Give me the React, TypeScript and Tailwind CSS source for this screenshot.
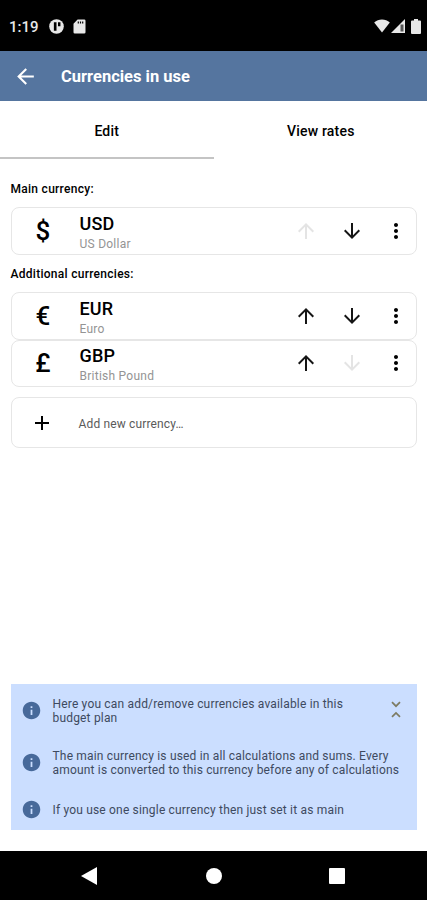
import { MdAdd, MdArrowBack, MdArrowDownward, MdArrowUpward, MdInfo, MdMoreVert } from "react-icons/md";

type Currency = {
  symbol: string;
  code: string;
  name: string;
  canMoveUp: boolean;
  canMoveDown: boolean;
};

const mainCurrency: Currency = { symbol: "$", code: "USD", name: "US Dollar", canMoveUp: false, canMoveDown: true };

const additionalCurrencies: Currency[] = [
  { symbol: "€", code: "EUR", name: "Euro", canMoveUp: true, canMoveDown: true },
  { symbol: "£", code: "GBP", name: "British Pound", canMoveUp: true, canMoveDown: false },
];

function StatusBar() {
  return (
    <div className="flex h-[51px] shrink-0 items-center bg-black pl-[9px] pr-[6px] pt-[2px] text-[#e8e8e8]">
      <span className="w-[40px] pt-[1px] text-[15px] font-medium">1:19</span>
      <svg className="-mt-[1px] h-[15px] w-[15px]" viewBox="0 0 16 16">
        <circle cx="8" cy="8" r="7.8" fill="currentColor" />
        <path d="M5.2 3.4h2.8v9H5.2zM9.6 3.4h2.6v4.4H9.6z" fill="#000" />
      </svg>
      <svg className="-mt-[1px] ml-[9px] h-[15px] w-[13px]" viewBox="0 0 13 15">
        <path d="M4.6 0.5h6.6A1.3 1.3 0 0 1 12.5 1.8v11.4a1.3 1.3 0 0 1-1.3 1.3H1.8A1.3 1.3 0 0 1 .5 13.2V4.8z" fill="currentColor" />
        <path d="M5.3 2.4v2M7.5 2.4v2M9.7 2.4v2" stroke="#000" strokeWidth="1.2" />
      </svg>
      <div className="-mt-[1px] ml-auto flex items-center">
        <svg className="h-[14px] w-4" viewBox="0 0 16 14">
          <path d="M8 13.6.2 3.6C4.4-.5 11.6-.5 15.8 3.6z" fill="currentColor" />
        </svg>
        <svg className="ml-[1px] h-[14px] w-[14px]" viewBox="0 0 14 14">
          <path d="M0 14 14 0v14z" fill="currentColor" />
          <path d="M9.5 5.5h3v7h-3z" fill="#555" />
        </svg>
        <svg className="ml-[6px] h-[15px] w-[10px]" viewBox="0 0 10 15">
          <path d="M3 0h4v1.6h2a1 1 0 0 1 1 1V14a1 1 0 0 1-1 1H1a1 1 0 0 1-1-1V2.6a1 1 0 0 1 1-1h2z" fill="currentColor" />
        </svg>
      </div>
    </div>
  );
}

function CurrencyCard({ currency }: { currency: Currency }) {
  return (
    <div className="flex h-[47.2px] items-center rounded-[8px] border-[1.5px] border-[#e6e6e6] bg-white">
      <span className="w-[63px] text-center text-[26px] font-medium leading-none">{currency.symbol}</span>
      <div className="ml-[5px] flex-1 pt-[4px]">
        <p className="text-[18px] font-medium leading-[22px] tracking-[0.2px]">{currency.code}</p>
        <p className="text-[12px] leading-[18px] tracking-[0.25px] text-[#949494]">{currency.name}</p>
      </div>
      <button className={currency.canMoveUp ? "text-[#151515]" : "text-[#e4e4e4]"}>
        <MdArrowUpward size={24} />
      </button>
      <button className={`ml-[22px] ${currency.canMoveDown ? "text-[#151515]" : "text-[#e4e4e4]"}`}>
        <MdArrowDownward size={24} />
      </button>
      <button className="ml-5 mr-[7.5px]">
        <MdMoreVert size={24} />
      </button>
    </div>
  );
}

export default function App() {
  return (
    <div className="flex h-[900px] w-[427px] flex-col overflow-hidden bg-white font-['Roboto',sans-serif] text-black">
      <StatusBar />

      {/* App bar */}
      <header className="flex h-[50px] shrink-0 items-center bg-[#55759f] pl-[13px] text-white">
        <MdArrowBack size={25} />
        <h1 className="ml-[23px] pt-[2px] text-[16.5px] font-bold">Currencies in use</h1>
      </header>

      {/* Tabs */}
      <nav className="grid h-[58px] shrink-0 grid-cols-2 text-[14px] font-medium tracking-[0.2px]">
        <button className="border-b-2 border-[#c4c4c4] pt-[5px]">Edit</button>
        <button className="border-b-2 border-transparent pl-[1px] pt-[5px]">View rates</button>
      </nav>

      <main className="flex flex-1 flex-col px-[10.5px]">
        <h2 className="mt-[22.4px] h-[26px] text-[12px] font-medium leading-[16px] tracking-[0.28px]">Main currency:</h2>
        <CurrencyCard currency={mainCurrency} />
        <h2 className="mt-[11.2px] h-[26.7px] text-[12px] font-medium leading-[16px] tracking-[0.28px]">Additional currencies:</h2>
        {additionalCurrencies.map((currency) => (
          <CurrencyCard key={currency.code} currency={currency} />
        ))}
        <button className="mt-[10.6px] flex h-[51px] items-center rounded-[8px] border-[1.5px] border-[#e6e6e6] text-left">
          <MdAdd size={24} className="ml-[18px]" />
          <span className="ml-[25px] pt-[2px] text-[12px] tracking-[0.15px] text-[#5a5a5a]">Add new currency…</span>
        </button>

        {/* Hints */}
        <section className="mb-[21px] mt-auto flex h-[146px] flex-col bg-[#cbdeff] pl-[10px] text-[12px] leading-[14.5px] tracking-[0.18px] text-[#3e4a60]">
          <div className="flex h-[52px] items-center">
            <MdInfo size={21} className="shrink-0 text-[#47699a]" />
            <p className="ml-[11px] w-[325px] pt-[2px]">
              Here you can add/remove currencies available in this
              <br />
              budget plan
            </p>
            <svg className="ml-[13px] h-[18px] w-[10px]" viewBox="0 0 10 18" fill="none" stroke="#7d7b62" strokeWidth="1.7">
              <path d="M1 1.2 5 5.2 9 1.2M1 15.9 5 11.9 9 15.9" />
            </svg>
          </div>
          <div className="flex h-[52px] items-center">
            <MdInfo size={21} className="shrink-0 text-[#47699a]" />
            <p className="ml-[11px] whitespace-nowrap pt-[2px]">
              The main currency is used in all calculations and sums. Every
              <br />
              amount is converted to this currency before any of calculations
            </p>
          </div>
          <div className="flex h-[42px] items-center">
            <MdInfo size={21} className="shrink-0 text-[#47699a]" />
            <p className="ml-[11px] pt-[2px]">If you use one single currency then just set it as main</p>
          </div>
        </section>
      </main>

      {/* System navigation */}
      <footer className="flex h-[49px] shrink-0 items-center bg-black">
        <svg className="ml-[81px] h-[18px] w-4" viewBox="0 0 16 18" fill="#fff">
          <path d="M0 9 16 0v18z" />
        </svg>
        <div className="ml-[109px] h-4 w-4 rounded-full bg-white" />
        <div className="ml-[107px] h-4 w-4 rounded-[1px] bg-white" />
      </footer>
    </div>
  );
}
